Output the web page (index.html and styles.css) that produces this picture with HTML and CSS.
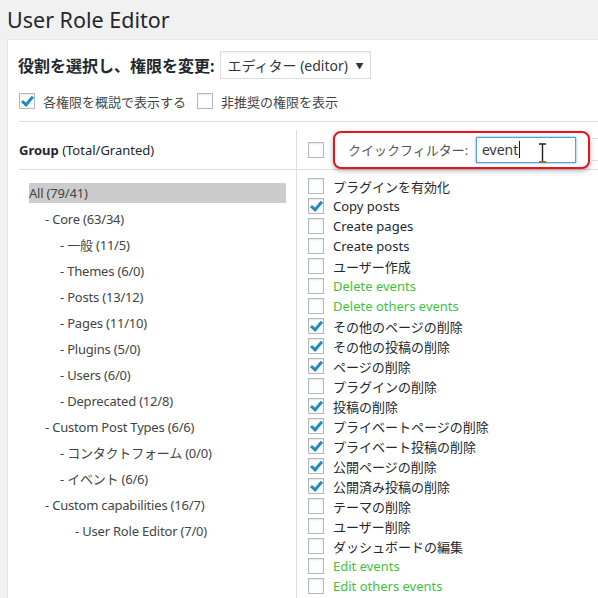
FILE: index.html
```html
<!DOCTYPE html>
<html lang="ja">
<head>
    <meta charset="UTF-8">
    <title>User Role Editor</title>
    <link rel="stylesheet" href="styles.css">
</head>
<body>
    <div class="wrap">
        <h1>User Role Editor</h1>

        <div class="panel">
            <div class="role-row">
                <span class="role-label">役割を選択し、権限を変更:</span>
                <div class="select">エディター (editor)<span class="arrow">▼</span></div>
            </div>

            <div class="options">
                <label class="opt"><span class="cb checked"></span>各権限を概説で表示する</label>
                <label class="opt"><span class="cb"></span>非推奨の権限を表示</label>
            </div>

            <div class="editor">
                <div class="groups">
                    <div class="col-head"><b>Group</b>&nbsp;(Total/Granted)</div>
                    <ul class="tree">
                        <li class="active">All (79/41)</li>
                        <li class="lv1">- Core (63/34)</li>
                        <li class="lv2">- 一般 (11/5)</li>
                        <li class="lv2">- Themes (6/0)</li>
                        <li class="lv2">- Posts (13/12)</li>
                        <li class="lv2">- Pages (11/10)</li>
                        <li class="lv2">- Plugins (5/0)</li>
                        <li class="lv2">- Users (6/0)</li>
                        <li class="lv2">- Deprecated (12/8)</li>
                        <li class="lv1">- Custom Post Types (6/6)</li>
                        <li class="lv2">- コンタクトフォーム (0/0)</li>
                        <li class="lv2">- イベント (6/6)</li>
                        <li class="lv1">- Custom capabilities (16/7)</li>
                        <li class="lv3">- User Role Editor (7/0)</li>
                    </ul>
                </div>

                <div class="caps">
                    <div class="col-head caps-head">
                        <span class="cb"></span>
                        <div class="filter">
                            <span class="filter-label">クイックフィルター:</span>
                            <div class="filter-input">event<span class="caret"></span>
                                <svg class="ibeam" width="9" height="20" viewBox="0 0 9 20">
                                    <path d="M1 1h7M4.5 1v18M1 19h7" stroke="#222" stroke-width="1.4" fill="none"/>
                                    <path d="M1 19h7" stroke="#c77a2a" stroke-width="1.4"/>
                                </svg>
                            </div>
                        </div>
                        <div class="filter-tail"></div>
                    </div>
                    <ul class="cap-list">
                        <li><span class="cb"></span>プラグインを有効化</li>
                        <li><span class="cb checked"></span>Copy posts</li>
                        <li><span class="cb"></span>Create pages</li>
                        <li><span class="cb"></span>Create posts</li>
                        <li><span class="cb"></span>ユーザー作成</li>
                        <li class="match"><span class="cb"></span>Delete events</li>
                        <li class="match"><span class="cb"></span>Delete others events</li>
                        <li><span class="cb checked"></span>その他のページの削除</li>
                        <li><span class="cb checked"></span>その他の投稿の削除</li>
                        <li><span class="cb checked"></span>ページの削除</li>
                        <li><span class="cb"></span>プラグインの削除</li>
                        <li><span class="cb checked"></span>投稿の削除</li>
                        <li><span class="cb checked"></span>プライベートページの削除</li>
                        <li><span class="cb checked"></span>プライベート投稿の削除</li>
                        <li><span class="cb checked"></span>公開ページの削除</li>
                        <li><span class="cb checked"></span>公開済み投稿の削除</li>
                        <li><span class="cb"></span>テーマの削除</li>
                        <li><span class="cb"></span>ユーザー削除</li>
                        <li><span class="cb"></span>ダッシュボードの編集</li>
                        <li class="match"><span class="cb"></span>Edit events</li>
                        <li class="match"><span class="cb"></span>Edit others events</li>
                        <li><span class="cb"></span></li>
                    </ul>
                </div>
            </div>
        </div>
    </div>
</body>
</html>
```

FILE: styles.css
```css
html, body {
    margin: 0;
    padding: 0;
    height: 100%;
    overflow: hidden;
}

body {
    background-color: #f1f1f1;
    font-family: "Noto Sans", "Noto Sans CJK JP", sans-serif;
    font-size: 13px;
    color: #444;
}

.wrap {
    padding-left: 7px;
    height: 100%;
}

h1 {
    margin: 0;
    padding: 6px 0 5px;
    font-size: 21.5px;
    font-weight: 400;
    line-height: 28px;
    color: #23282d;
}

.panel {
    background-color: #fff;
    border: 1px solid #e5e5e5;
    border-right: none;
    padding-left: 11px;
    height: 100%;
}

.role-row {
    display: flex;
    align-items: center;
    gap: 5px;
    padding-top: 11px;
}

.role-label {
    font-size: 16px;
    font-weight: 700;
    color: #23282d;
    margin-left: -1px;
}

.select {
    box-sizing: border-box;
    width: 151px;
    height: 28px;
    border: 1px solid #ddd;
    box-shadow: inset 0 1px 2px rgba(0, 0, 0, 0.07);
    padding: 0 6px 0 7px;
    display: flex;
    align-items: center;
    justify-content: space-between;
    font-size: 14px;
    color: #32373c;
}

    .select .arrow {
        font-size: 8px;
        color: #333;
    }

.options {
    display: flex;
    margin-top: 12px;
    height: 20px;
    align-items: center;
}

.opt {
    display: flex;
    align-items: center;
    margin-right: 11px;
    color: #444;
}

    .opt .cb {
        margin-right: 8px;
    }

.cb {
    position: relative;
    display: inline-block;
    flex: none;
    box-sizing: border-box;
    width: 16px;
    height: 16px;
    border: 1px solid #b4b9be;
    background-color: #fff;
    box-shadow: inset 0 1px 2px rgba(0, 0, 0, 0.1);
}

    .cb.checked::before {
        content: "";
        position: absolute;
        left: 4px;
        top: 0;
        width: 4px;
        height: 9px;
        border-right: 3px solid #1e8cbe;
        border-bottom: 3px solid #1e8cbe;
        transform: rotate(40deg);
    }

.editor {
    display: flex;
    margin-top: 10px;
    border-top: 1px solid #ddd;
    padding-top: 8px;
    height: 100%;
}

.groups {
    box-sizing: border-box;
    width: 278px;
    flex: none;
    border-right: 1px solid #ddd;
}

.col-head {
    box-sizing: border-box;
    height: 40px;
    border-bottom: 1px solid #ddd;
    display: flex;
    align-items: center;
    color: #23282d;
}

.tree {
    list-style: none;
    margin: 0;
    padding: 13px 10px 0 10px;
}

    .tree li {
        height: 20px;
        line-height: 20px;
        margin-bottom: 6px;
        color: #444;
        white-space: nowrap;
        letter-spacing: -0.2px;
    }

        .tree li.active {
            background-color: #ccc;
        }

        .tree li.lv1 {
            padding-left: 16px;
        }

        .tree li.lv2 {
            padding-left: 31px;
        }

        .tree li.lv3 {
            padding-left: 46px;
        }

.caps {
    flex: 1;
    min-width: 0;
}

.caps-head {
    padding-left: 11px;
}

.filter {
    box-sizing: border-box;
    flex: none;
    width: 257px;
    height: 38px;
    margin-left: 9px;
    border: 2px solid #e8131b;
    border-radius: 8px;
    box-shadow: 0 2px 5px rgba(0, 0, 0, 0.3);
    display: flex;
    align-items: center;
    padding: 0 12px 0 13px;
    background-color: #fff;
}

.filter-label {
    color: #555;
    flex: 1;
    white-space: nowrap;
}

.filter-input {
    position: relative;
    box-sizing: border-box;
    width: 100px;
    height: 26px;
    border: 1px solid #5b9dd9;
    box-shadow: 0 0 2px rgba(30, 140, 190, 0.8);
    padding-left: 5px;
    display: flex;
    align-items: center;
    color: #32373c;
    font-size: 14px;
}

.caret {
    display: inline-block;
    width: 1px;
    height: 17px;
    background-color: #222;
    margin-left: 1px;
}

.ibeam {
    position: absolute;
    left: 61px;
    top: 5px;
}

.filter-tail {
    flex: 1;
    height: 21px;
    margin-left: 2px;
    border-top: 1px solid #ddd;
    border-bottom: 1px solid #ddd;
}

.cap-list {
    list-style: none;
    margin: 0;
    padding: 6px 0 0 11px;
}

    .cap-list li {
        display: flex;
        align-items: center;
        height: 20px;
        color: #23282d;
        white-space: nowrap;
    }

        .cap-list li .cb {
            margin-right: 9px;
        }

        .cap-list li.match {
            color: #3ec13e;
        }
```
